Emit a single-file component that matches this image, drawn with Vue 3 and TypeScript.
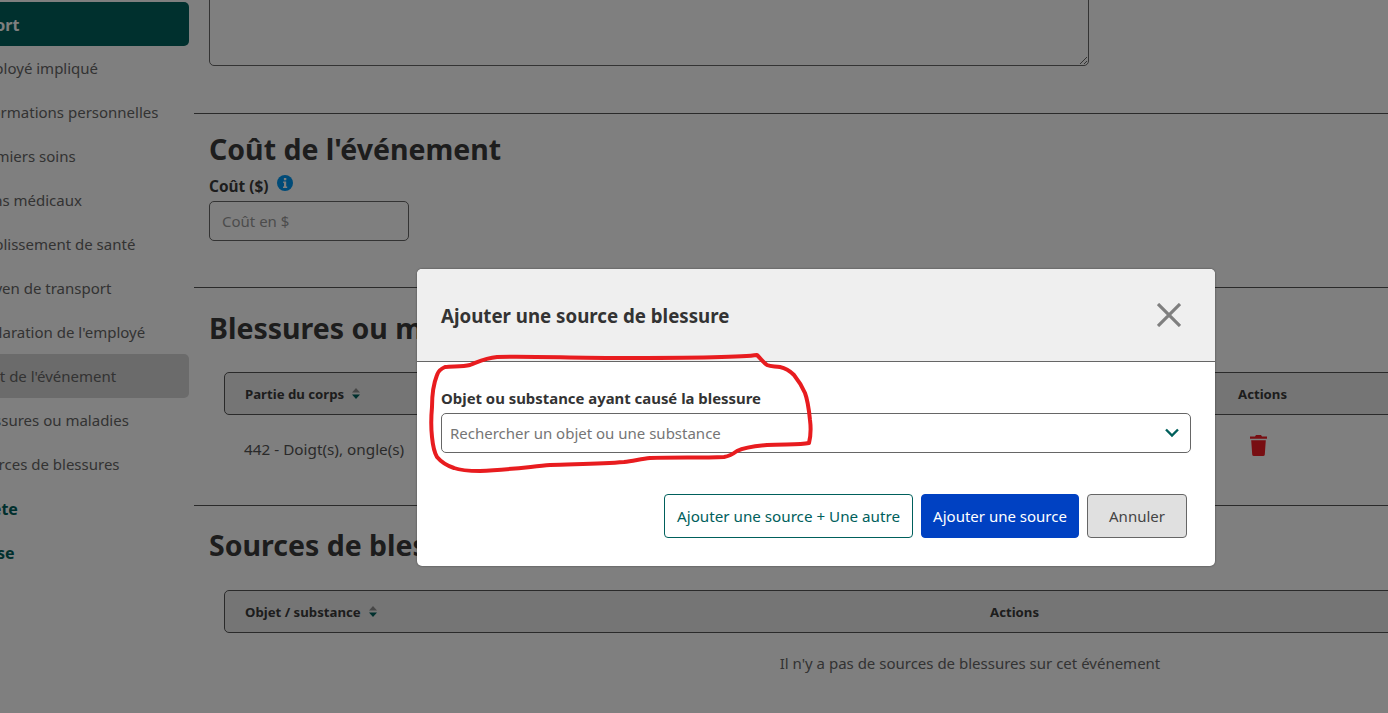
<script setup lang="ts">
const items = [
  { label: 'Rapport', cls: 'head' },
  { label: 'Employé impliqué', cls: '' },
  { label: 'Informations personnelles', cls: '' },
  { label: 'Premiers soins', cls: '' },
  { label: 'Soins médicaux', cls: '' },
  { label: 'Établissement de santé', cls: '' },
  { label: 'Moyen de transport', cls: '' },
  { label: "Déclaration de l'employé", cls: '' },
  { label: "Coût de l'événement", cls: 'active' },
  { label: 'Blessures ou maladies', cls: '' },
  { label: 'Sources de blessures', cls: '' },
  { label: 'Enquête', cls: 'link' },
  { label: 'Analyse', cls: 'link' },
]
</script>

<template>
  <div class="root">
    <div class="page">
      <nav class="side">
        <a v-for="it in items" :key="it.label" class="item" :class="it.cls">{{ it.label }}</a>
      </nav>
      <main class="main">
        <section class="sec first">
          <textarea class="area"></textarea>
        </section>
        <section class="sec cost">
          <h2>Coût de l'événement</h2>
          <label class="lab"><span class="labtext">Coût ($)</span>
            <svg class="info" viewBox="0 0 16 16" width="16" height="16">
              <circle cx="8" cy="8" r="8" fill="#0096f0" />
              <rect x="6.9" y="3" width="2.4" height="2.3" fill="#fff" />
              <path d="M6.2 6.6h3v5h1v1.3H6v-1.3h1v-3.7h-.8z" fill="#fff" />
            </svg>
          </label>
          <input class="field" placeholder="Coût en $" />
        </section>
        <section class="sec injuries">
          <h2>Blessures ou maladies</h2>
          <div class="thead">
            <div class="th c1">Partie du corps
              <svg class="sort" viewBox="0 0 8 11" width="8" height="11">
                <path d="M4 0l4 4.4H0z" fill="#8f8f8f" /><path d="M4 11l4-4.4H0z" fill="#00605c" />
              </svg>
            </div>
            <div class="th c2">Actions</div>
          </div>
          <div class="trow">
            <div class="td c1">442 - Doigt(s), ongle(s)</div>
            <div class="td c2">
              <svg class="trash" viewBox="0 0 17 21" width="17" height="21">
                <path d="M6 0h5l1 1.6h5v2.2H0V1.6h5z" fill="#f01c24" />
                <path d="M1.2 5.2h14.6l-1 14.2q-.1 1.6-1.8 1.6H4q-1.7 0-1.8-1.6z" fill="#f01c24" />
              </svg>
            </div>
          </div>
        </section>
        <section class="sec sources">
          <h2>Sources de blessures</h2>
          <div class="thead half">
            <div class="th">Objet / substance
              <svg class="sort" viewBox="0 0 8 11" width="8" height="11">
                <path d="M4 0l4 4.4H0z" fill="#8f8f8f" /><path d="M4 11l4-4.4H0z" fill="#00605c" />
              </svg>
            </div>
            <div class="th">Actions</div>
          </div>
          <p class="empty">Il n'y a pas de sources de blessures sur cet événement</p>
        </section>
      </main>
    </div>

    <div class="backdrop">
      <div class="dialog">
        <header class="dhead">
          <h3>Ajouter une source de blessure</h3>
          <svg class="close" viewBox="0 0 24 24" width="24" height="24">
            <path d="M1 1l22 22M23 1L1 23" stroke="#7f7f7f" stroke-width="3.2" fill="none" />
          </svg>
        </header>
        <div class="dbody">
          <label class="dlab">Objet ou substance ayant causé la blessure</label>
          <div class="select">
            <input placeholder="Rechercher un objet ou une substance" />
            <svg viewBox="0 0 14 10" width="14" height="10">
              <path d="M1 1.5l6 6 6-6" stroke="#00605c" stroke-width="2.4" fill="none" />
            </svg>
          </div>
        </div>
        <footer class="dfoot">
          <button class="btn outline">Ajouter une source + Une autre</button>
          <button class="btn primary">Ajouter une source</button>
          <button class="btn cancel">Annuler</button>
        </footer>
      </div>
    </div>

    <svg class="scribble" viewBox="0 0 1388 713" width="1388" height="713">
      <path
        d="M757 355C745 357 700 358 617 358C570 358 530 356 497 357C485 358 478 362 470 365C462 367 452 366 445 367C440 369 438 372 437 375C433 385 432 395 432 407C431 418 431 428 432 437C433 447 434 452 437 457C442 463 448 466 454 468C462 471 471 471 480 471C505 470 528 467 550 465C575 464 600 464 624 462C633 461 641 459 650 458C675 457 700 458 724 457C730 456 733 454 737 451C745 447 755 446 767 445C785 444 800 445 809 443C811 435 811 428 810 420C809 410 808 401 805 393C802 386 798 380 794 375C790 371 785 368 780 367C775 366 771 367 767 365C763 362 760 358 757 355Z"
        fill="none" stroke="#e81c1f" stroke-width="4" stroke-linejoin="round" />
    </svg>
  </div>
</template>

<style scoped>
.root {
  position: relative;
  width: 1388px;
  height: 713px;
  overflow: hidden;
  background: #fff;
  font-family: "Noto Sans", "Open Sans", sans-serif;
  color: #333;
}
.page {
  display: flex;
  gap: 5px;
  width: 1800px;
  margin-left: -48px;
}
.side {
  flex: 0 0 237px;
  display: flex;
  flex-direction: column;
  padding-top: 2px;
}
.item {
  height: 44px;
  box-sizing: border-box;
  display: flex;
  align-items: center;
  padding-left: 20px;
  border-radius: 5px;
  font-size: 15px;
  color: #666;
}
.item.head {
  background: #00605c;
  color: #fff;
  font-weight: 700;
  font-size: 16px;
  padding: 2px 0 0 3px;
}
.item.active { background: #d6d6d6; }
.item.link { color: #00605c; font-weight: 700; font-size: 16px; padding: 2px 0 0 0; }

.main { flex: 1; min-width: 0; }
.sec {
  padding-left: 15px;
  border-bottom: 1px solid #555;
}
.sec.sources { border-bottom: 0; }
h2 {
  margin: 0;
  font-size: 28.5px;
  line-height: 34px;
  font-weight: 700;
  color: #3a3a3a;
}
.first { margin-top: -100px; padding-bottom: 47px; }
.area {
  display: block;
  width: 880px;
  height: 166px;
  box-sizing: border-box;
  border: 1px solid #666;
  border-radius: 5px;
  background: #fff;
}
.cost { padding-top: 18px; padding-bottom: 46px; }
.lab {
  display: flex;
  align-items: flex-start;
  gap: 9px;
  margin-top: 10px;
  height: 20px;
  line-height: 20px;
  font-size: 15.4px;
  font-weight: 700;
  color: #3a3a3a;
}
.labtext { padding-top: 1px; }
.info { margin-top: -1px; }
.field {
  display: block;
  margin-top: 5px;
  width: 200px;
  height: 40px;
  box-sizing: border-box;
  border: 1px solid #666;
  border-radius: 5px;
  padding: 0 12px;
  font: 15px "Noto Sans", sans-serif;
  background: #fff;
}
.field::placeholder { color: #999; opacity: 1; }

.injuries { padding-top: 23px; height: 218px; box-sizing: border-box; }
.injuries h2 { margin-bottom: 27px; }
.thead {
  display: grid;
  grid-template-columns: 993px 1fr;
  margin-left: 15px;
  width: 1492px;
  height: 43px;
  box-sizing: border-box;
  border: 1px solid #555;
  border-radius: 5px;
  background: #ebebeb;
}
.th {
  display: flex;
  align-items: center;
  gap: 8px;
  padding-left: 20px;
  font-size: 13.2px;
  font-weight: 700;
  color: #3a3a3a;
}
.thead.half { grid-template-columns: 1fr 1fr; }
.trow {
  display: grid;
  grid-template-columns: 993px 1fr;
  margin-left: 15px;
  width: 1492px;
  padding-top: 19px;
}
.td { padding-left: 20px; height: 30px; display: flex; align-items: center; font-size: 15.3px; color: #555; }
.trow .c2 { padding-left: 33px; }
.trash { margin-top: -8px; }
.sources { padding-top: 22px; }
.sources h2 { margin-bottom: 28px; }
.empty {
  margin: 20px 0 0 15px;
  width: 1492px;
  text-align: center;
  font-size: 15px;
  line-height: 20px;
  color: #666;
}

.backdrop {
  position: absolute;
  inset: 0;
  background: rgba(0, 0, 0, 0.5);
  padding: 269px 0 0 417px;
  box-sizing: border-box;
}
.dialog {
  width: 798px;
  height: 297px;
  background: #fff;
  border-radius: 5px;
  overflow: hidden;
  box-shadow: 0 0 2px rgba(0, 0, 0, 0.5);
}
.dhead {
  height: 93px;
  box-sizing: border-box;
  background: #efefef;
  border-bottom: 1px solid #666;
  display: flex;
  align-items: center;
  justify-content: space-between;
  padding: 0 34px 0 24px;
}
.dhead h3 { margin: 0; font-size: 18.7px; font-weight: 700; color: #333; }
.dbody { padding: 26px 24px 0; }
.dlab {
  display: block;
  font-size: 14.9px;
  line-height: 20px;
  font-weight: 700;
  color: #333;
}
.select {
  margin-top: 5px;
  width: 750px;
  height: 40px;
  box-sizing: border-box;
  border: 1px solid #666;
  border-radius: 5px;
  display: flex;
  align-items: center;
  padding: 0 11px 0 8px;
}
.select input {
  flex: 1;
  border: 0;
  outline: 0;
  padding: 0;
  background: transparent;
  font: 15px "Noto Sans", sans-serif;
}
.select input::placeholder { color: #757575; opacity: 1; }
.dfoot {
  display: flex;
  justify-content: flex-end;
  gap: 8px;
  padding: 41px 28px 0 0;
}
.btn {
  height: 44px;
  box-sizing: border-box;
  border-radius: 4px;
  font: 15px "Noto Sans", sans-serif;
  padding: 0;
}
.outline { width: 249px; background: #fff; border: 1px solid #00605c; color: #00605c; font-size: 15.2px; }
.primary { width: 158px; background: #0041c2; border: 1px solid #0041c2; color: #fff; }
.cancel { width: 100px; background: #e0e0e0; border: 1px solid #666; color: #444; }
.scribble { position: absolute; left: 0; top: 0; pointer-events: none; }
</style>
